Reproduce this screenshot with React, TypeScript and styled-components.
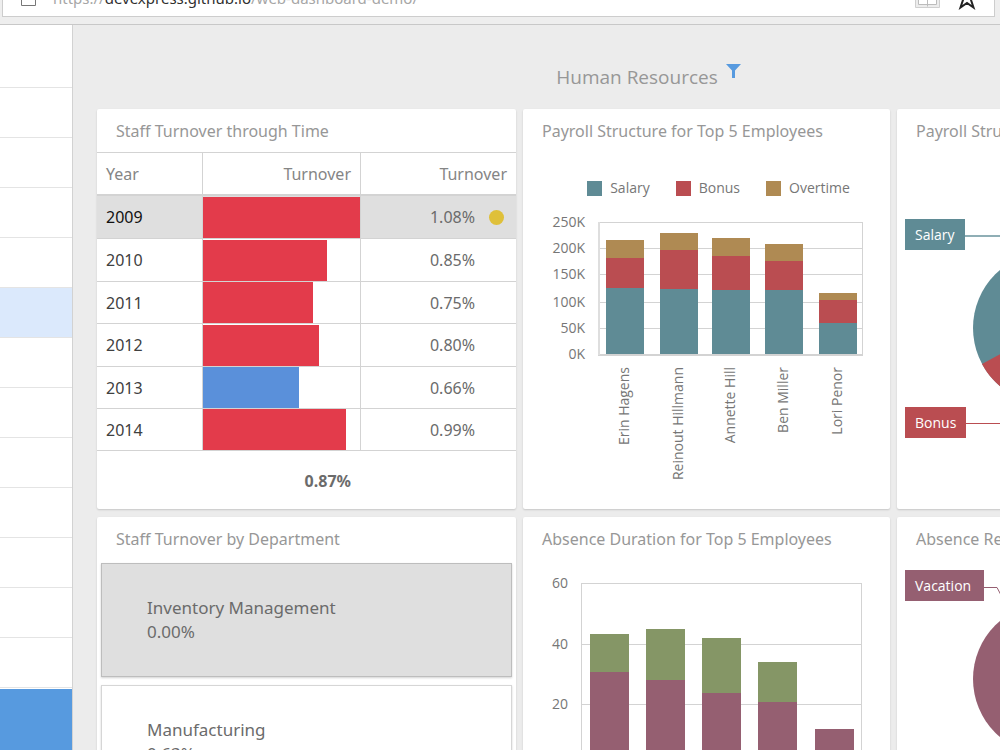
import React from "react";
import styled, { createGlobalStyle } from "styled-components";

const colors = {
  page: "#ececec",
  line: "#d3d3d3",
  title: "#979797",
  text: "#6b6b6b",
  teal: "#5f8b95",
  red: "#ba4d51",
  tan: "#af8a53",
  plum: "#955f71",
  green: "#859666",
};

const chartFont = `"Open Sans", "Noto Sans", sans-serif`;

const GlobalStyle = createGlobalStyle`
  * { box-sizing: border-box; }
  body {
    margin: 0;
    background: ${colors.page};
    font-family: "Noto Sans", "Open Sans", sans-serif;
    color: ${colors.text};
  }
`;

const Shell = styled.div`
  display: flex;
  flex-direction: column;
  height: 100vh;
  overflow: hidden;
`;

/* The browser toolbar is scrolled partly out of view. */
const Toolbar = styled.header`
  flex: none;
  margin-top: -24px;
  padding: 3px 5px 7px 2px;
  border-bottom: 1px solid #c8c8c8;
  background: #eeeeee;
`;

const AddressBar = styled.div`
  display: flex;
  align-items: center;
  height: 38px;
  padding: 0 16px 0 18px;
  border: 1px solid #cdcdcd;
  background: #ffffff;
`;

const Address = styled.span`
  flex: 1;
  margin-left: 17px;
  font-size: 15px;
  line-height: 22px;
  color: #a6a6a6;
`;

const Host = styled.span`
  color: #2f2f2f;
`;

const ToolIcon = styled.svg`
  flex: none;
  margin-left: 16px;
`;

const Workspace = styled.div`
  display: flex;
  flex: 1;
  min-height: 0;
`;

const Sidebar = styled.nav`
  flex: none;
  width: 73px;
  border-right: 1px solid #d2d2d2;
  background: #ffffff;
`;

const SideList = styled.ul`
  margin: 0;
  padding: 0 0 1px;
  list-style: none;
`;

const SideItem = styled.li<{ $tall?: boolean; $selected?: boolean }>`
  height: ${(p) => (p.$tall ? 63 : 50)}px;
  border-bottom: 1px solid #e4e4e4;
  background: ${(p) => (p.$selected ? "#dbe9fc" : "transparent")};
`;

const SideAction = styled.div`
  height: 100px;
  background: #579adf;
`;

const Main = styled.main`
  flex: 1;
  min-width: 1127px;
  padding: 39px 0 0 24px;
`;

const TitleBar = styled.div`
  display: flex;
  justify-content: center;
  gap: 8px;
  height: 45px;
`;

const Title = styled.h1`
  margin: 0;
  font-family: ${chartFont};
  font-size: 19px;
  line-height: 26px;
  font-weight: 400;
  color: ${colors.title};
`;

const FilterButton = styled.button`
  width: 15px;
  height: 15px;
  padding: 0;
  border: 0;
  background: none;
  display: block;
`;

const Grid = styled.div`
  display: grid;
  grid-template-columns: minmax(419px, 419fr) minmax(367px, 367fr) minmax(303px, 303fr);
  grid-template-rows: 400px 400px;
  gap: 8px 7px;
`;

const Card = styled.section`
  overflow: hidden;
  border-radius: 2px;
  background: #ffffff;
  box-shadow: 0 1px 2px rgba(0, 0, 0, 0.16);
`;

const CardTitle = styled.h2`
  margin: 0;
  padding: 1px 19px 0;
  font-size: 16px;
  line-height: 42px;
  font-weight: 400;
  white-space: nowrap;
  color: ${colors.title};
`;

const Table = styled.table`
  width: 100%;
  border-collapse: separate;
  border-spacing: 0;
  table-layout: fixed;
  font-size: 16px;
  line-height: 22px;
`;

const YearCol = styled.col`
  width: 105px;
`;

const BarCol = styled.col`
  width: 158px;
`;

const HeadCell = styled.th<{ $right?: boolean }>`
  height: 44px;
  padding: 0 9px;
  border-top: 1px solid ${colors.line};
  border-bottom: 2px solid ${colors.line};
  font-weight: 400;
  text-align: ${(p) => (p.$right ? "right" : "left")};
  color: #858585;

  & + & {
    border-left: 1px solid ${colors.line};
  }
`;

const Row = styled.tr<{ $selected?: boolean; $tall?: boolean }>`
  height: ${(p) => (p.$tall ? 43 : 42)}px;
  background: ${(p) => (p.$selected ? "#dfdfdf" : "#ffffff")};

  & > * {
    border-bottom: 1px solid ${colors.line};
  }
`;

const YearCell = styled.th<{ $selected?: boolean }>`
  padding: 0 9px;
  font-weight: 400;
  text-align: left;
  color: ${(p) => (p.$selected ? "#111111" : "#404040")};
`;

const BarCell = styled.td`
  padding: 0;
  border-left: 1px solid ${colors.line};
`;

const Bar = styled.div<{ $low?: boolean }>`
  height: 41px;
  background: ${(p) => (p.$low ? "#5a90da" : "#e33b4b")};
`;

const ValueCell = styled.td`
  padding: 0 12px 0 9px;
  border-left: 1px solid ${colors.line};
`;

const Value = styled.div`
  display: flex;
  align-items: center;
  justify-content: flex-end;
  gap: 14px;
`;

const Dot = styled.span<{ $on?: boolean }>`
  width: 15px;
  height: 15px;
  border-radius: 50%;
  background: ${(p) => (p.$on ? "#dfc03a" : "transparent")};
`;

const TotalCell = styled.td`
  height: 60px;
  padding: 0 9px;
  font-weight: 700;
  text-align: right;
`;

const Tiles = styled.div`
  display: grid;
  gap: 8px;
  padding: 3px 4px;
`;

const Tile = styled.button<{ $selected?: boolean }>`
  height: 114px;
  padding: 0 45px;
  border: 1px solid ${(p) => (p.$selected ? "#bdbdbd" : "#d6d6d6")};
  background: ${(p) => (p.$selected ? "#dfdfdf" : "#ffffff")};
  box-shadow: 0 1px 2px rgba(0, 0, 0, 0.18);
  font: inherit;
  font-size: 17px;
  line-height: 24px;
  text-align: left;
  color: ${colors.text};
`;

const TileLine = styled.span`
  display: block;
`;

const Legend = styled.ul`
  display: flex;
  justify-content: center;
  gap: 26px;
  margin: 0;
  padding: 26px 0 9px 24px;
  list-style: none;
  font-family: ${chartFont};
  font-size: 14px;
  line-height: 20px;
  color: #767676;
`;

const LegendItem = styled.li`
  display: flex;
  align-items: center;
  gap: 8px;
`;

const Swatch = styled.span<{ $color: string }>`
  width: 15px;
  height: 15px;
  background: ${(p) => p.$color};
`;

const Chart = styled.svg`
  display: block;
  width: 100%;

  text {
    font-family: ${chartFont};
    font-size: 14px;
    fill: #767676;
  }

  text.callout {
    fill: #ffffff;
  }
`;

const turnover = [
  { year: "2009", value: 1.08, tall: true },
  { year: "2010", value: 0.85, tall: true },
  { year: "2011", value: 0.75 },
  { year: "2012", value: 0.8, tall: true },
  { year: "2013", value: 0.66 },
  { year: "2014", value: 0.99 },
];

const barWidth: Record<string, number> = {
  "2009": 100,
  "2010": 79,
  "2011": 70,
  "2012": 74,
  "2013": 61,
  "2014": 91,
};

type Stack = { x: number; name?: string; tops: number[] };

const payroll: Stack[] = [
  { x: 83, name: "Erin Hagens", tops: [81, 51, 33] },
  { x: 137, name: "Reinout Hillmann", tops: [82, 43, 26] },
  { x: 189, name: "Annette Hill", tops: [83, 49, 31] },
  { x: 242, name: "Ben Miller", tops: [83, 54, 37] },
  { x: 296, name: "Lori Penor", tops: [116, 93, 86] },
];

const absence: Stack[] = [
  { x: 67, tops: [112, 74] },
  { x: 123, tops: [120, 69] },
  { x: 179, tops: [133, 78] },
  { x: 235, tops: [142, 102] },
  { x: 292, tops: [169] },
];

function Bars({ data, width, base, palette }: { data: Stack[]; width: number; base: number; palette: string[] }) {
  return (
    <>
      {data.map((s) =>
        s.tops.map((top, i) => (
          <rect
            key={`${s.x}-${i}`}
            x={s.x}
            y={top}
            width={width}
            height={(i === 0 ? base : s.tops[i - 1]) - top}
            fill={palette[i]}
          />
        ))
      )}
    </>
  );
}

function PayrollChart() {
  const ticks: [string, number][] = [
    ["250K", 15],
    ["200K", 41],
    ["150K", 67],
    ["100K", 95],
    ["50K", 121],
    ["0K", 147],
  ];
  return (
    <Chart viewBox="0 0 367 302" shapeRendering="crispEdges">
      {ticks.map(([label, y]) => (
        <g key={label}>
          <rect x="75" y={y} width="265" height={y === 147 ? 2 : 1} fill={colors.line} />
          <text x="62" y={y + 5} textAnchor="end">{label}</text>
        </g>
      ))}
      <rect x="75" y="15" width="2" height="133" fill="#dedede" />
      <rect x="339" y="15" width="1" height="133" fill={colors.line} />
      <Bars data={payroll} width={38} base={147} palette={[colors.teal, colors.red, colors.tan]} />
      {payroll.map((s) => (
        <text key={s.name} transform={`translate(${s.x + 23} 160) rotate(-90)`} textAnchor="end">
          {s.name}
        </text>
      ))}
    </Chart>
  );
}

function AbsenceChart() {
  const ticks: [string, number][] = [
    ["60", 23],
    ["40", 84],
    ["20", 144],
    ["0", 205],
  ];
  return (
    <Chart viewBox="0 0 367 302" shapeRendering="crispEdges">
      {ticks.map(([label, y]) => (
        <g key={label}>
          <rect x="58" y={y} width="281" height="1" fill={colors.line} />
          <text x="45" y={y + 5} textAnchor="end">{label}</text>
        </g>
      ))}
      <rect x="58" y="23" width="1" height="182" fill={colors.line} />
      <rect x="338" y="23" width="1" height="182" fill={colors.line} />
      <Bars data={absence} width={39} base={205} palette={[colors.plum, colors.green]} />
    </Chart>
  );
}

function PayrollPie() {
  return (
    <Chart viewBox="0 0 303 357">
      <circle cx="152" cy="176" r="76" fill={colors.teal} />
      <path d="M152 176 L85 212 A76 76 0 0 0 216 217 Z" fill={colors.red} />
      <path d="M152 176 L216 217 A76 76 0 0 0 216 135 Z" fill={colors.tan} />
      <path d="M68 84H118L130 103" fill="none" stroke={colors.teal} strokeWidth="2" strokeOpacity="0.7" />
      <path d="M69 271.500H140V252" fill="none" stroke={colors.red} />
      <rect x="8" y="67" width="60" height="31" fill={colors.teal} />
      <rect x="8" y="255" width="61" height="31" fill={colors.red} />
      <text className="callout" x="18" y="88">Salary</text>
      <text className="callout" x="18" y="276">Bonus</text>
    </Chart>
  );
}

function AbsencePie() {
  return (
    <Chart viewBox="0 0 303 357">
      <circle cx="152" cy="119" r="76" fill={colors.plum} />
      <path d="M152 119 V43 A76 76 0 0 1 216 160 Z" fill={colors.green} />
      <path d="M87 27.500H100L114 54" fill="none" stroke={colors.plum} />
      <rect x="8" y="10" width="79" height="31" fill={colors.plum} />
      <text className="callout" x="18" y="31">Vacation</text>
    </Chart>
  );
}

export default function App() {
  return (
    <Shell>
      <GlobalStyle />
      <Toolbar>
        <AddressBar>
          <svg width="15" height="18" viewBox="0 0 15 18" fill="none" stroke="#777777">
            <path d="M.5 .5H10L14.500 5V16.500H.5Z" />
          </svg>
          <Address>
            https://<Host>devexpress.github.io</Host>/web-dashboard-demo/
          </Address>
          <ToolIcon width="25" height="24" viewBox="0 0 25 24" fill="none">
            <path d="M.5 2.500H24.500V21.500H.5Z" fill="#ececec" stroke="#cfcfcf" />
            <path d="M3.500 1V18.500H21.500V1" fill="#ffffff" stroke="#bcbcbc" />
            <path d="M12.500 2V20.500" stroke="#bcbcbc" />
          </ToolIcon>
          <ToolIcon width="22" height="24" viewBox="0 0 22 24" fill="none" stroke="#222222" strokeWidth="2">
            <path d="M11 2L13.500 9.500H21L15 14L17.500 21.500L11 17L4.500 21.500L7 14L1 9.500H8.500Z" />
          </ToolIcon>
        </AddressBar>
      </Toolbar>
      <Workspace>
        <Sidebar>
          <SideList>
            <SideItem $tall />
            {Array.from({ length: 12 }, (_, i) => (
              <SideItem key={i} $selected={i === 4} />
            ))}
          </SideList>
          <SideAction />
        </Sidebar>
        <Main>
          <TitleBar>
            <Title>Human Resources</Title>
            <FilterButton type="button" aria-label="Filter">
              <svg width="15" height="15" viewBox="0 0 15 15">
                <path d="M0 0H15L9 6.500V14H6V6.500Z" fill="#579adf" />
              </svg>
            </FilterButton>
          </TitleBar>
          <Grid>
            <Card>
              <CardTitle>Staff Turnover through Time</CardTitle>
              <Table>
                <colgroup>
                  <YearCol />
                  <BarCol />
                  <col />
                </colgroup>
                <thead>
                  <tr>
                    <HeadCell scope="col">Year</HeadCell>
                    <HeadCell scope="col" $right>Turnover</HeadCell>
                    <HeadCell scope="col" $right>Turnover</HeadCell>
                  </tr>
                </thead>
                <tbody>
                  {turnover.map(({ year, value, tall }, i) => (
                    <Row key={year} $selected={i === 0} $tall={tall}>
                      <YearCell scope="row" $selected={i === 0}>{year}</YearCell>
                      <BarCell>
                        <Bar $low={value < 0.7} style={{ width: `${barWidth[year]}%` }} />
                      </BarCell>
                      <ValueCell>
                        <Value>
                          {value.toFixed(2)}%
                          <Dot $on={i === 0} />
                        </Value>
                      </ValueCell>
                    </Row>
                  ))}
                </tbody>
                <tfoot>
                  <tr>
                    <td />
                    <TotalCell>0.87%</TotalCell>
                    <td />
                  </tr>
                </tfoot>
              </Table>
            </Card>
            <Card>
              <CardTitle>Payroll Structure for Top 5 Employees</CardTitle>
              <Legend>
                <LegendItem><Swatch $color={colors.teal} />Salary</LegendItem>
                <LegendItem><Swatch $color={colors.red} />Bonus</LegendItem>
                <LegendItem><Swatch $color={colors.tan} />Overtime</LegendItem>
              </Legend>
              <PayrollChart />
            </Card>
            <Card>
              <CardTitle>Payroll Structure</CardTitle>
              <PayrollPie />
            </Card>
            <Card>
              <CardTitle>Staff Turnover by Department</CardTitle>
              <Tiles>
                <Tile type="button" $selected>
                  <TileLine>Inventory Management</TileLine>
                  <TileLine>0.00%</TileLine>
                </Tile>
                <Tile type="button">
                  <TileLine>Manufacturing</TileLine>
                  <TileLine>0.63%</TileLine>
                </Tile>
              </Tiles>
            </Card>
            <Card>
              <CardTitle>Absence Duration for Top 5 Employees</CardTitle>
              <AbsenceChart />
            </Card>
            <Card>
              <CardTitle>Absence Reasons</CardTitle>
              <AbsencePie />
            </Card>
          </Grid>
        </Main>
      </Workspace>
    </Shell>
  );
}
